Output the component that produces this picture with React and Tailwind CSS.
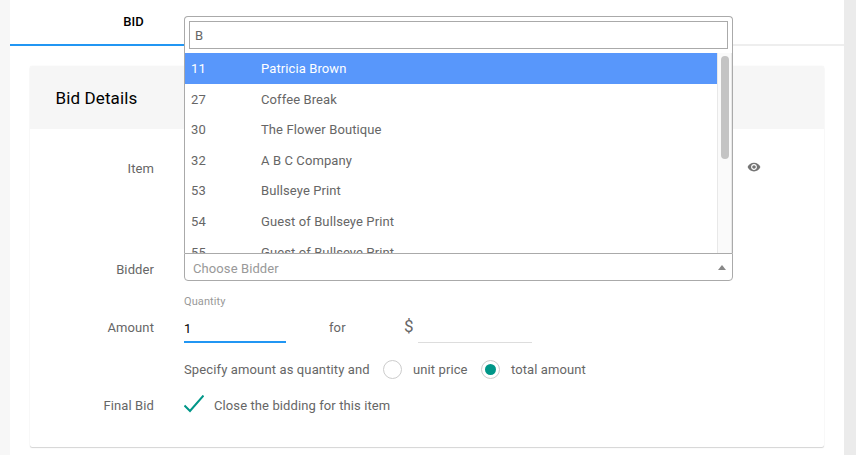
import React from "react";

const bidders = [
  ["11", "Patricia Brown"],
  ["27", "Coffee Break"],
  ["30", "The Flower Boutique"],
  ["32", "A B C Company"],
  ["53", "Bullseye Print"],
  ["54", "Guest of Bullseye Print"],
  ["55", "Guest of Bullseye Print"],
];

function Row({ label, className = "", labelClass = "", children }) {
  return (
    <div className={`flex ${className}`}>
      <div className={`w-[124px] mr-[30px] shrink-0 text-right leading-5 ${labelClass}`}>{label}</div>
      {children}
    </div>
  );
}

function BidderMenu() {
  return (
    <div className="absolute bottom-full -left-px -right-px z-10 mb-px flex h-[237px] flex-col rounded-t-[4px] border border-b-0 border-[#aaa] bg-white text-[#666]">
      <div className="p-1">
        <div className="h-7 border border-[#aaa] pl-[5px] leading-[27px]">B</div>
      </div>
      <div className="flex h-[200px]">
        <ul className="h-full flex-1 overflow-hidden leading-5">
          {bidders.map(([number, name], i) => (
            <li
              key={number}
              className={`flex h-[30.6px] items-center pl-1.5 pt-[1.4px] ${i === 0 ? "bg-[#5897fb] text-white" : ""}`}
            >
              <span className="w-[70px]">{number}</span>
              <span>{name}</span>
            </li>
          ))}
        </ul>
        <div className="w-[15px] border-l border-r border-[#e8e8e8] bg-[#fafafa] pl-[3px] pt-[3px]">
          <div className="h-[103px] w-2 rounded-full bg-[#c4c4c4]" />
        </div>
      </div>
    </div>
  );
}

export default function App() {
  return (
    <div className="flex h-[455px] w-[856px] overflow-hidden bg-white font-['Roboto',sans-serif] text-[13px] tracking-[0.1px] text-[#666]">
      <div className="w-2.5 bg-[#f7f7f7]" />
      <main className="flex-1">
        <nav className="flex h-[46px]">
          <div className="flex w-[247px] items-center justify-center border-b-2 border-[#2196f3] font-medium tracking-normal text-black">
            BID
          </div>
          <div className="flex-1 border-b-2 border-[#eee]" />
        </nav>
        <section className="mx-5 mt-5 h-[381px] rounded-[2px] shadow-[0_1px_1px_rgba(0,0,0,0.16),0_0_1px_rgba(0,0,0,0.12)]">
          <h2 className="flex h-[63px] items-center rounded-t-[2px] bg-[#f6f6f6] pl-[25.5px] pt-[3px] text-[17px] tracking-[0.12px] text-black">
            Bid Details
          </h2>
          <Row label="Item" className="h-[124px] pt-[30px]">
            <svg viewBox="0 0 24 24" className="ml-[563px] mt-[1px] h-[14px] w-[14px] fill-[#757575]">
              <path d="M12 4.5C7 4.5 2.73 7.61 1 12c1.73 4.39 6 7.5 11 7.5s9.27-3.11 11-7.5c-1.73-4.39-6-7.5-11-7.5zM12 17c-2.76 0-5-2.24-5-5s2.24-5 5-5 5 2.24 5 5-2.24 5-5 5zm0-8c-1.66 0-3 1.34-3 3s1.34 3 3 3 3-1.34 3-3-1.34-3-3-3z" />
            </svg>
          </Row>
          <Row label="Bidder" className="h-7" labelClass="pt-[7px]">
            <div className="relative flex h-7 w-[549px] items-center justify-between rounded-b-[4px] border border-[#aaa] pl-2 pr-[6px] pt-[2px] text-[#999]">
              <span className="pt-[2px]">Choose Bidder</span>
              <svg viewBox="0 0 8 5" className="mb-[2px] h-[5px] w-2 fill-[#888]">
                <path d="M0 5 4 0l4 5z" />
              </svg>
              <BidderMenu />
            </div>
          </Row>
          <Row label="Amount" className="h-[62px]" labelClass="pt-[37px]">
            <div className="w-[102px] border-b-2 border-[#2196f3] pt-[13px]">
              <div className="text-[11px] leading-4 text-[#999]">Quantity</div>
              <div className="pt-[9px] leading-5 text-black">1</div>
            </div>
            <div className="ml-[43px] w-[75px] pt-[37px] leading-5">for</div>
            <div className="pt-[34px] text-[17px] leading-[22px]">$</div>
            <div className="ml-[4px] w-[114px] border-b border-[#ddd]" />
          </Row>
          <div className="ml-[154px] mt-[11px] flex h-[30px] items-center">
            <span className="w-[199px] pt-[2px] tracking-[0.13px]">Specify amount as quantity and</span>
            <span className="mr-[11px] h-[19px] w-[19px] rounded-full border border-[#ccc]" />
            <span className="w-[68px] pt-[2px]">unit price</span>
            <span className="mr-[11px] flex h-[19px] w-[19px] items-center justify-center rounded-full border border-[#ccc]">
              <span className="h-[11px] w-[11px] rounded-full bg-[#009688]" />
            </span>
            <span className="pt-[2px]">total amount</span>
          </div>
          <Row label="Final Bid" className="h-[31px] pt-[12px]">
            <svg viewBox="0 0 20 18" className="-mt-px h-[18px] w-5 fill-none stroke-[#009688] stroke-2">
              <path d="M.5 10.5 6 16 19.5.5" />
            </svg>
            <span className="ml-[10px] leading-5">Close the bidding for this item</span>
          </Row>
        </section>
      </main>
      <div className="w-3 bg-[#ebebeb]" />
    </div>
  );
}
